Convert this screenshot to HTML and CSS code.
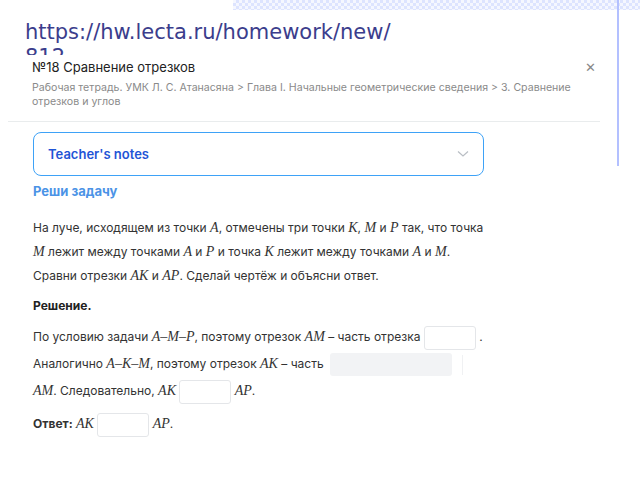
FILE: index.html
```html
<!DOCTYPE html>
<html lang="ru">

<head>
    <meta charset="UTF-8">
    <meta name="viewport" content="width=device-width, initial-scale=1.0">
    <title>Сравнение отрезков</title>
    <link rel="stylesheet" href="styles.css">
</head>

<body>
    <div class="pattern"></div>
    <div class="scrollline"></div>

    <div class="url">https://hw.lecta.ru/homework/new/<br>812</div>

    <div class="modal">
        <div class="header">
            <div class="title">№18 Сравнение отрезков</div>
            <div class="close">&#x2715;</div>
        </div>
        <div class="crumbs">Рабочая тетрадь. УМК Л. С. Атанасяна &gt; Глава I. Начальные геометрические сведения &gt; 3. Сравнение отрезков и углов</div>
        <div class="separator"></div>

        <div class="content">
            <div class="notes">
                <span>Teacher's notes</span>
                <svg class="chevron" width="12" height="8" viewBox="0 0 12 8">
                    <path d="M1 1.5 L6 6 L11 1.5" fill="none" stroke="#b9bec4" stroke-width="1.2" />
                </svg>
            </div>

            <div class="task-title">Реши задачу</div>

            <div class="task">
                <p class="line">На луче, исходящем из точки <i>A</i>, отмечены три точки <i>K</i>, <i>M</i> и <i>P</i> так, что точка</p>
                <p class="line"><i>M</i> лежит между точками <i>A</i> и <i>P</i> и точка <i>K</i> лежит между точками <i>A</i> и <i>M</i>.</p>
                <p class="line">Сравни отрезки <i>AK</i> и <i>AP</i>. Сделай чертёж и объясни ответ.</p>
            </div>

            <div class="solution">Решение.</div>

            <div class="steps">
                <p class="line">По условию задачи <i>A–M–P</i>, поэтому отрезок <i>AM</i> – часть отрезка <span class="box"></span> .</p>
                <p class="line">Аналогично <i>A–K–M</i>, поэтому отрезок <i>AK</i> – часть <span class="box wide"></span><span class="faint"></span></p>
                <p class="line"><i>AM</i>. Следовательно, <i>AK</i> <span class="box"></span> <i>AP</i>.</p>
            </div>

            <p class="line answer"><b>Ответ:</b> <i>AK</i> <span class="box"></span> <i>AP</i>.</p>
        </div>
    </div>
</body>

</html>
```

FILE: styles.css
```css
* {
    margin: 0;
    padding: 0;
    box-sizing: border-box;
}

body {
    width: 640px;
    height: 480px;
    overflow: hidden;
    position: relative;
    background: white;
    font-family: 'Inter', 'Roboto', sans-serif;
    color: #2b2b2b;
}

.pattern {
    margin-left: 233px;
    height: 10px;
    background: repeating-conic-gradient(#dde4ff 0 25%, #f5f7ff 0 50%) 0 0 / 6px 6px;
}

.scrollline {
    position: absolute;
    left: 617px;
    top: 0;
    width: 2px;
    height: 166px;
    background: #b3c0ff;
}

.url {
    height: 45px;
    overflow: hidden;
    padding-left: 25px;
    padding-top: 10px;
    font-family: 'DejaVu Sans', sans-serif;
    font-size: 21px;
    line-height: 25px;
    color: #3b3d8c;
}

.modal {
    margin-left: 8px;
    width: 592px;
    background: white;
}

.header {
    display: flex;
    justify-content: space-between;
    align-items: center;
    padding: 1px 4px 0 24px;
    height: 22px;
    line-height: 16px;
}

.title {
    font-size: 13px;
    color: #222;
}

.close {
    font-size: 13px;
    color: #888;
}

.crumbs {
    padding: 4px 0 0 24px;
    font-size: 10.6px;
    line-height: 14px;
    color: #8a8a8a;
    width: 570px;
}

.separator {
    margin-top: 12px;
    height: 1px;
    background: #e9eced;
}

.content {
    padding: 10px 0 0 25px;
}

.notes {
    width: 451px;
    height: 44px;
    border: 1.5px solid #3ea2f7;
    border-radius: 8px;
    display: flex;
    justify-content: space-between;
    align-items: center;
    padding: 0 14px 0 14px;
    font-size: 13px;
    font-weight: 600;
    color: #1f55d6;
}

.task-title {
    margin-top: 7px;
    font-size: 13px;
    font-weight: 700;
    line-height: 16px;
    color: #4b93e6;
}

.task {
    margin-top: 17px;
}

.line {
    font-size: 12px;
    height: 24px;
    line-height: 24px;
    color: #333;
}

.line i {
    font-family: 'Liberation Serif', serif;
    font-size: 14px;
}

.solution {
    margin-top: 10px;
    font-size: 12px;
    font-weight: 700;
    line-height: 16px;
    color: #222;
}

.steps {
    margin-top: 9px;
}

.steps .line {
    height: 27px;
    line-height: 27px;
}

.box {
    display: inline-block;
    width: 52px;
    height: 24px;
    vertical-align: middle;
    border: 1px solid #e4e6e9;
    border-radius: 3px;
}

.box.wide {
    width: 122px;
    height: 23px;
    border: none;
    background: #f2f3f5;
    margin-left: 3px;
}

.faint {
    display: inline-block;
    width: 1px;
    height: 20px;
    margin-left: 10px;
    vertical-align: middle;
    background: #f0f1f3;
}

.answer {
    margin-top: 8px;
}

.answer b {
    font-weight: 700;
}
```
